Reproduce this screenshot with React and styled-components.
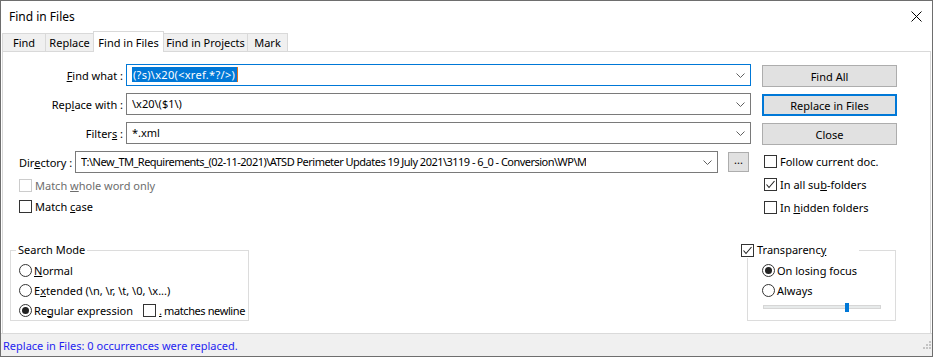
import styled, { createGlobalStyle } from 'styled-components';

const GlobalStyle = createGlobalStyle`
  html, body {
    margin: 0;
    padding: 0;
    background: #ffffff;
  }
  body {
    font-family: 'Noto Sans', 'Liberation Sans', Arial, sans-serif;
    font-size: 11px;
    color: #000000;
  }
`;

const tabs = [
    { name: 'Find', width: 44 },
    { name: 'Replace', width: 49 },
    { name: 'Find in Files', width: 71, active: true },
    { name: 'Find in Projects', width: 85 },
    { name: 'Mark', width: 41 }
];

function Chevron(){
    return (
        <svg width='9' height='5' viewBox='0 0 9 5'>
            <polyline points='0.5,0.5 4.5,4.5 8.5,0.5' fill='none' stroke='#606060' strokeWidth='1' />
        </svg>
    );
}

function Checkbox({ checked, disabled }){
    return (
        <Box $disabled={disabled}>
            {checked && (
                <svg width='11' height='11' viewBox='0 0 11 11'>
                    <polyline points='1.5,5.5 4,8.5 9.5,2' fill='none' stroke='#222222' strokeWidth='1.1' />
                </svg>
            )}
        </Box>
    );
}

function Radio({ checked }){
    return <Circle>{checked && <Dot />}</Circle>;
}

export default function App(){
    return (
        <>
            <GlobalStyle />
            <Window>
                <TitleBar>
                    <Title>Find in Files</Title>
                    <svg width='11' height='11' viewBox='0 0 11 11'>
                        <line x1='0.5' y1='0.5' x2='10.5' y2='10.5' stroke='#000' strokeWidth='1' />
                        <line x1='10.5' y1='0.5' x2='0.5' y2='10.5' stroke='#000' strokeWidth='1' />
                    </svg>
                </TitleBar>

                <TabStrip>
                    {tabs.map(t => (
                        <Tab key={t.name} $w={t.width} $active={t.active}>{t.name}</Tab>
                    ))}
                </TabStrip>

                <Panel>
                    <TopArea>
                        <Form>
                            <Fields>
                                <FieldRow>
                                    <FieldLabel $w={120} $align='right'><u>F</u>ind what :</FieldLabel>
                                    <Combo $w={625} $gap={3} $focused>
                                        <ComboText $spacing={0.3}><Selection>(?s)\x20(&lt;xref.*?/&gt;)</Selection></ComboText>
                                        <Chevron />
                                    </Combo>
                                </FieldRow>
                                <FieldRow>
                                    <FieldLabel $w={120} $align='right'>Rep<u>l</u>ace with :</FieldLabel>
                                    <Combo $w={625} $gap={3}>
                                        <ComboText>\x20\($1\)</ComboText>
                                        <Chevron />
                                    </Combo>
                                </FieldRow>
                                <FieldRow>
                                    <FieldLabel $w={120} $align='right'>Filter<u>s</u> :</FieldLabel>
                                    <Combo $w={625} $gap={3}>
                                        <ComboText>*.xml</ComboText>
                                        <Chevron />
                                    </Combo>
                                </FieldRow>
                                <FieldRow>
                                    <FieldLabel $w={72} $pl={16} $align='left'>Dir<u>e</u>ctory :</FieldLabel>
                                    <Combo $w={643}>
                                        <ComboText $spacing={-0.52}>T:\New_TM_Requirements_(02-11-2021)\ATSD Perimeter Updates 19 July 2021\3119 - 6_0 - Conversion\WP\M</ComboText>
                                        <Chevron />
                                    </Combo>
                                    <BrowseButton>...</BrowseButton>
                                </FieldRow>
                            </Fields>
                            <LeftChecks>
                                <CheckRow $h={21} $disabled>
                                    <Checkbox disabled />
                                    <span>Match <u>w</u>hole word only</span>
                                </CheckRow>
                                <CheckRow $h={21}>
                                    <Checkbox />
                                    <span>Match <u>c</u>ase</span>
                                </CheckRow>
                            </LeftChecks>
                        </Form>

                        <SideColumn>
                            <Buttons>
                                <Button>Find All</Button>
                                <Button $default>Replace in Files</Button>
                                <Button>Close</Button>
                            </Buttons>
                            <SideChecks>
                                <CheckRow $h={23}>
                                    <Checkbox />
                                    <span>Follow current doc.</span>
                                </CheckRow>
                                <CheckRow $h={23}>
                                    <Checkbox checked />
                                    <span>In all su<u>b</u>-folders</span>
                                </CheckRow>
                                <CheckRow $h={23}>
                                    <Checkbox />
                                    <span>In <u>h</u>idden folders</span>
                                </CheckRow>
                            </SideChecks>
                        </SideColumn>
                    </TopArea>

                    <BottomArea>
                        <Group $w={239} $pl={8}>
                            <Legend $ml={-3}>Search Mode</Legend>
                            <Options>
                                <OptionRow>
                                    <Radio />
                                    <span><u>N</u>ormal</span>
                                </OptionRow>
                                <OptionRow>
                                    <Radio />
                                    <span>E<u>x</u>tended (\n, \r, \t, \0, \x...)</span>
                                </OptionRow>
                                <OptionRow>
                                    <RadioLabel $w={122}>
                                        <Radio checked />
                                        <span>Re<u>g</u>ular expression</span>
                                    </RadioLabel>
                                    <CheckRow $h={18}>
                                        <Checkbox />
                                        <TightText><u>.</u> matches newline</TightText>
                                    </CheckRow>
                                </OptionRow>
                            </Options>
                        </Group>

                        <Group $w={149} $pl={14}>
                            <Legend $ml={-23} $w={120}>
                                <Checkbox checked />
                                <span>Transparenc<u>y</u></span>
                            </Legend>
                            <Options>
                                <OptionRow>
                                    <Radio checked />
                                    <span>On losing focus</span>
                                </OptionRow>
                                <OptionRow>
                                    <Radio />
                                    <span>Always</span>
                                </OptionRow>
                                <SliderTrack>
                                    <SliderThumb $offset={81} />
                                </SliderTrack>
                            </Options>
                        </Group>
                    </BottomArea>
                </Panel>

                <StatusBar>
                    <StatusText>Replace in Files: 0 occurrences were replaced.</StatusText>
                    <svg width='8' height='8' viewBox='0 0 8 8'>
                        <rect x='6' y='0' width='2' height='2' fill='#c4c4c4' />
                        <rect x='3' y='3' width='2' height='2' fill='#c4c4c4' />
                        <rect x='6' y='3' width='2' height='2' fill='#c4c4c4' />
                        <rect x='0' y='6' width='2' height='2' fill='#c4c4c4' />
                        <rect x='3' y='6' width='2' height='2' fill='#c4c4c4' />
                        <rect x='6' y='6' width='2' height='2' fill='#c4c4c4' />
                    </svg>
                </StatusBar>
            </Window>
        </>
    );
}

const Window = styled.div`
    width: 933px;
    height: 357px;
    box-sizing: border-box;
    border: 1px solid #6e6e6e;
    display: flex;
    flex-direction: column;
    background: #ffffff;
`;

const TitleBar = styled.div`
    height: 30px;
    display: flex;
    align-items: center;
    justify-content: space-between;
    padding: 0 10px 0 8px;
    flex-shrink: 0;
`;

const Title = styled.span`
    font-size: 12px;
`;

const TabStrip = styled.div`
    height: 20px;
    display: flex;
    align-items: flex-end;
    padding-left: 1px;
    flex-shrink: 0;
`;

const Tab = styled.div`
    width: ${p => p.$w}px;
    height: ${p => p.$active ? 21 : 18}px;
    margin-bottom: ${p => p.$active ? -1 : 0}px;
    margin-left: -1px;
    &:first-child { margin-left: 0; }
    box-sizing: border-box;
    border: 1px solid #d9d9d9;
    border-bottom: none;
    background: ${p => p.$active ? '#ffffff' : '#f0f0f0'};
    position: relative;
    z-index: ${p => p.$active ? 1 : 0};
    display: flex;
    align-items: center;
    justify-content: center;
    white-space: nowrap;
`;

const Panel = styled.div`
    flex: 1;
    display: flex;
    flex-direction: column;
    margin: 0 1px;
    border: 1px solid #d9d9d9;
    border-bottom: none;
`;

const TopArea = styled.div`
    display: flex;
    padding-top: 12px;
`;

const Form = styled.div`
    width: 748px;
    display: flex;
    flex-direction: column;
`;

const Fields = styled.div`
    display: flex;
    flex-direction: column;
    gap: 7px;
`;

const FieldRow = styled.div`
    height: 22px;
    display: flex;
    align-items: center;
`;

const FieldLabel = styled.label`
    width: ${p => p.$w}px;
    padding-left: ${p => p.$pl || 0}px;
    box-sizing: border-box;
    text-align: ${p => p.$align};
    flex-shrink: 0;
    white-space: nowrap;
`;

const Combo = styled.div`
    width: ${p => p.$w}px;
    height: 22px;
    margin-left: ${p => p.$gap || 0}px;
    box-sizing: border-box;
    border: 1px solid ${p => p.$focused ? '#0078d7' : '#7a7a7a'};
    background: #ffffff;
    display: flex;
    align-items: center;
    justify-content: space-between;
    gap: 6px;
    padding: 0 5px;
    flex-shrink: 0;
`;

const ComboText = styled.span`
    white-space: nowrap;
    overflow: hidden;
    line-height: 16px;
    letter-spacing: ${p => p.$spacing || 0}px;
`;

const Selection = styled.span`
    background: #0078d7;
    color: #ffffff;
    padding: 0 2px;
    margin-left: -1px;
    border-right: 1px solid #e07020;
`;

const BrowseButton = styled.button`
    width: 21px;
    height: 20px;
    margin-left: 10px;
    padding: 0 0 4px;
    box-sizing: border-box;
    border: 1px solid #adadad;
    background: #e1e1e1;
    font-family: inherit;
    font-size: 11px;
    color: #000000;
    display: flex;
    align-items: flex-end;
    justify-content: center;
`;

const LeftChecks = styled.div`
    display: flex;
    flex-direction: column;
    margin-top: 2px;
    padding-left: 16px;
`;

const CheckRow = styled.label`
    height: ${p => p.$h}px;
    display: flex;
    align-items: center;
    gap: 3px;
    white-space: nowrap;
    flex-shrink: 0;
    color: ${p => p.$disabled ? '#6d6d6d' : '#000000'};
`;

const TightText = styled.span`
    letter-spacing: -0.4px;
`;

const Box = styled.span`
    width: 13px;
    height: 13px;
    box-sizing: border-box;
    border: 1px solid ${p => p.$disabled ? '#cccccc' : '#333333'};
    background: #ffffff;
    display: flex;
    align-items: center;
    justify-content: center;
    flex-shrink: 0;
`;

const Circle = styled.span`
    width: 13px;
    height: 13px;
    box-sizing: border-box;
    border: 1px solid #333333;
    border-radius: 50%;
    background: #ffffff;
    display: flex;
    align-items: center;
    justify-content: center;
    flex-shrink: 0;
`;

const Dot = styled.span`
    width: 7px;
    height: 7px;
    border-radius: 50%;
    background: #222222;
`;

const SideColumn = styled.div`
    width: 135px;
    margin-left: 11px;
    padding-top: 1px;
    display: flex;
    flex-direction: column;
`;

const Buttons = styled.div`
    display: flex;
    flex-direction: column;
    gap: 7px;
`;

const Button = styled.button`
    height: 22px;
    box-sizing: border-box;
    border: 1px solid ${p => p.$default ? '#0078d7' : '#adadad'};
    box-shadow: ${p => p.$default ? 'inset 0 0 0 1px #0078d7' : 'none'};
    background: #e1e1e1;
    font-family: inherit;
    font-size: 11px;
    color: #000000;
    padding: 0;
`;

const SideChecks = styled.div`
    display: flex;
    flex-direction: column;
    margin-top: 5px;
    padding-left: 2px;
`;

const BottomArea = styled.div`
    margin-top: auto;
    display: flex;
    justify-content: space-between;
    padding: 0 34px 12px 7px;
`;

const Group = styled.fieldset`
    width: ${p => p.$w}px;
    box-sizing: border-box;
    margin: 0;
    border: 1px solid #dcdcdc;
    padding: 0 8px 1px ${p => p.$pl}px;
    min-width: 0;
`;

const Legend = styled.legend`
    line-height: 16px;
    padding: 0 2px;
    margin-left: ${p => p.$ml}px;
    width: ${p => p.$w ? `${p.$w}px` : 'auto'};
    box-sizing: border-box;
    background: #ffffff;
    display: ${p => p.$w ? 'flex' : 'block'};
    align-items: center;
    gap: 3px;
`;

const Options = styled.div`
    display: flex;
    flex-direction: column;
    gap: 2px;
    padding-top: 3px;
`;

const OptionRow = styled.div`
    height: 18px;
    display: flex;
    align-items: center;
    gap: 2px;
    white-space: nowrap;
`;

const RadioLabel = styled.span`
    width: ${p => p.$w}px;
    flex-shrink: 0;
    display: flex;
    align-items: center;
    gap: 2px;
`;

const SliderTrack = styled.div`
    width: 118px;
    height: 4px;
    margin: 4px 0 0 1px;
    box-sizing: border-box;
    border: 1px solid #d6d6d6;
    background: #e7eaea;
    display: flex;
    align-items: center;
`;

const SliderThumb = styled.div`
    width: 4px;
    height: 9px;
    margin-left: ${p => p.$offset}px;
    background: #0078d7;
    flex-shrink: 0;
`;

const StatusBar = styled.div`
    height: 22px;
    flex-shrink: 0;
    border-top: 1px solid #dadada;
    background: #f0f0f0;
    display: flex;
    align-items: center;
    justify-content: space-between;
    padding: 0 1px 0 2px;
`;

const StatusText = styled.span`
    color: #1f1ff0;
`;
